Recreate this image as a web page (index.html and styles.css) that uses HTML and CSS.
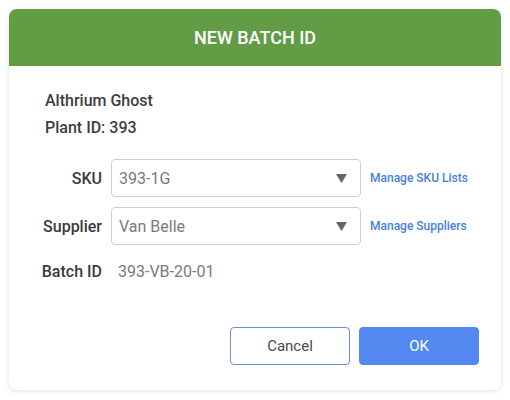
FILE: index.html
```html
<!DOCTYPE html>
<html>
<head>
<meta charset="utf-8">
<link rel="stylesheet" href="styles.css">
</head>
<body>
<div class="card">
  <div class="header">NEW BATCH ID</div>
  <div class="content">
    <div class="info">
      <div class="info-line">Althrium Ghost</div>
      <div class="info-line">Plant ID: 393</div>
    </div>
    <div class="form">
      <div class="row">
        <div class="label">SKU</div>
        <div class="select">
          <span class="select-text">393-1G</span>
          <svg class="arrow" width="11" height="9" viewBox="0 0 11 9"><polygon points="0,0 11,0 5.5,9" fill="#666"/></svg>
        </div>
        <a class="link">Manage SKU Lists</a>
      </div>
      <div class="row">
        <div class="label">Supplier</div>
        <div class="select">
          <span class="select-text">Van Belle</span>
          <svg class="arrow" width="11" height="9" viewBox="0 0 11 9"><polygon points="0,0 11,0 5.5,9" fill="#666"/></svg>
        </div>
        <a class="link">Manage Suppliers</a>
      </div>
      <div class="row row-batch">
        <div class="label">Batch ID</div>
        <div class="value">393-VB-20-01</div>
      </div>
    </div>
    <div class="actions">
      <button class="btn btn-cancel">Cancel</button>
      <button class="btn btn-ok">OK</button>
    </div>
  </div>
</div>
</body>
</html>
```
FILE: styles.css
```css
html, body {
  margin: 0;
  padding: 0;
  background: #ffffff;
}
body {
  padding: 9px;
  font-family: Roboto, "Liberation Sans", sans-serif;
}
.card {
  width: 492px;
  height: 381px;
  box-sizing: border-box;
  border-radius: 8px;
  background: #fff;
  box-shadow: 0 1px 5px rgba(0,0,0,0.12);
  overflow: hidden;
  display: flex;
  flex-direction: column;
}
.header {
  height: 57px;
  background: #629c45;
  color: #fff;
  font-size: 18px;
  font-weight: 500;
  display: flex;
  align-items: center;
  justify-content: center;
  flex-shrink: 0;
}
.content {
  flex: 1;
  padding: 21px 22px 25px 36px;
  display: flex;
  flex-direction: column;
}
.info-line {
  font-size: 16px;
  font-weight: 500;
  color: #3d3d3d;
  line-height: 27px;
}
.form {
  margin-top: 18px;
  display: flex;
  flex-direction: column;
  gap: 10px;
}
.row {
  display: flex;
  align-items: center;
  height: 38px;
}
.row-batch {
  height: 32px;
}
.label {
  width: 57px;
  flex-shrink: 0;
  display: flex;
  justify-content: flex-end;
  white-space: nowrap;
  font-size: 16px;
  font-weight: 500;
  color: #3a3a3a;
  margin-right: 9px;
}
.select {
  width: 250px;
  height: 38px;
  box-sizing: border-box;
  border: 1px solid #cfcfcf;
  border-radius: 4px;
  display: flex;
  align-items: center;
  justify-content: space-between;
  padding: 0 13px 0 7px;
}
.select-text, .value {
  font-size: 16px;
  color: #7a7a7a;
}
.value {
  padding-left: 7px;
}
.link {
  margin-left: 9px;
  font-size: 12px;
  font-weight: 500;
  color: #4a7fd6;
}
.actions {
  margin-top: auto;
  display: flex;
  justify-content: flex-end;
  gap: 9px;
}
.btn {
  width: 120px;
  height: 38px;
  border-radius: 4px;
  font-family: Roboto, "Liberation Sans", sans-serif;
  font-size: 15px;
  cursor: pointer;
}
.btn-cancel {
  background: #fff;
  border: 1px solid #6b8fcf;
  color: #4a4a4a;
}
.btn-ok {
  background: #5288f0;
  border: 1px solid #5288f0;
  color: #fff;
}
```
